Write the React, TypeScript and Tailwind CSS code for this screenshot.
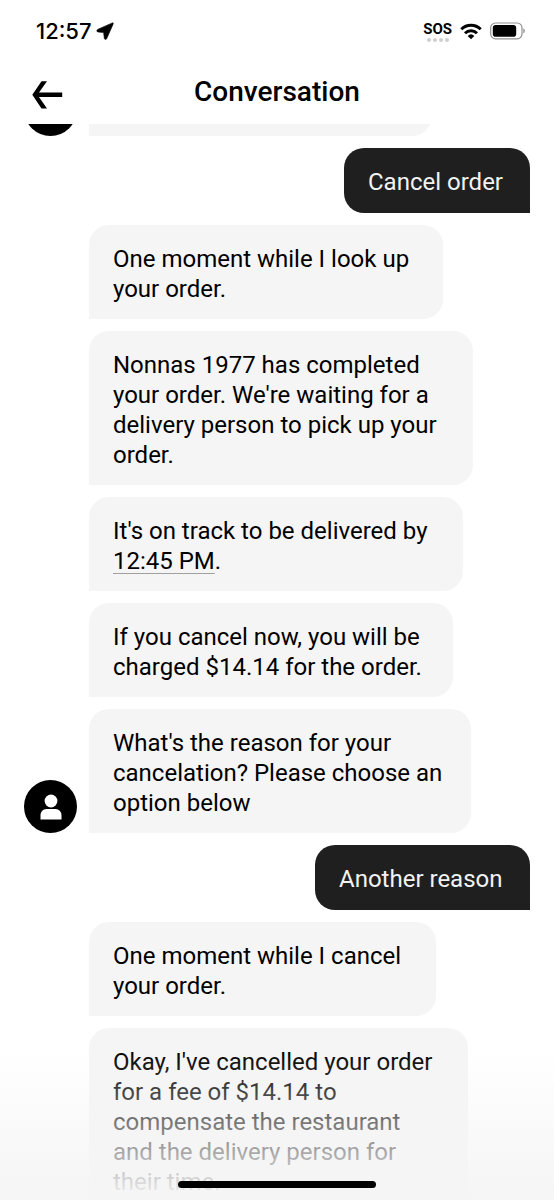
import type { ReactNode } from "react";

function LocationArrow() {
  return (
    <svg viewBox="0 0 18 18" className="size-[18px]" aria-hidden="true">
      <path d="M16.300.9 1.600 7.400C.4 8 .7 9.900 2 10l5.600.600.700 5.700c.1 1.300 1.800 1.600 2.400.4L17.200 1.900c.3-.7-.2-1.300-.9-1Z" fill="#000" stroke="#000" strokeWidth="0.600" />
    </svg>
  );
}

function WifiIcon() {
  return (
    <svg viewBox="0 0 22 17" className="h-[17px] w-[22px]" aria-hidden="true">
      <g fill="none" stroke="#000" strokeWidth="3">
        <path d="M1.300 6.300a13.800 13.800 0 0 1 19.400 0" />
        <path d="M5 10.300a8.600 8.600 0 0 1 12 0" />
      </g>
      <path d="M7.700 12.900a4.800 4.800 0 0 1 6.600 0L11 16.300Z" fill="#000" />
    </svg>
  );
}

function BatteryIcon() {
  return (
    <svg viewBox="0 0 36 18" className="h-[18px] w-[36px]" aria-hidden="true">
      <rect x="0.700" y="1" width="31.300" height="15.800" rx="4.800" fill="none" stroke="#8f8f8f" strokeWidth="1.200" />
      <rect x="2.800" y="3.100" width="23.400" height="11.600" rx="2.800" fill="#000" />
      <path d="M33.300 6.300c2 .8 2 4.400 0 5.200Z" fill="#8f8f8f" />
    </svg>
  );
}

function BackIcon() {
  return (
    <svg viewBox="0 0 32 28" className="h-7 w-8" aria-hidden="true">
      <path d="M9.500.300H15L7 11.600h23.200v4.500H7l8 11.300H9.500L.3 13.850Z" fill="#000" />
    </svg>
  );
}

function Avatar() {
  return (
    <span className="flex size-[53px] shrink-0 items-center justify-center rounded-full bg-black">
      <svg viewBox="0 0 22 26" className="h-[26px] w-[22px]" aria-hidden="true">
        <circle cx="11" cy="7" r="6.400" fill="#fff" />
        <path d="M.5 25.400v-4.600a5.800 5.800 0 0 1 5.800-5.800h9.400a5.800 5.800 0 0 1 5.800 5.800v4.600Z" fill="#fff" />
      </svg>
    </span>
  );
}

function Received({ width, avatar, children }: { width: string; avatar?: boolean; children: ReactNode }) {
  return (
    <li className="flex items-end gap-3">
      {avatar ? <Avatar /> : <span className="w-[53px] shrink-0" />}
      <p className={`rounded-[20px] rounded-bl-none bg-[#f5f5f5] px-6 pt-[19px] pb-[15px] text-black ${width}`}>{children}</p>
    </li>
  );
}

function Sent({ width, children }: { width: string; children: ReactNode }) {
  return (
    <li className="flex justify-end">
      <p className={`rounded-[20px] rounded-br-none bg-[#1f1f1f] px-6 pt-[19px] pb-4 text-[#f2f2f2] ${width}`}>{children}</p>
    </li>
  );
}

export default function App() {
  return (
    <div className="relative flex h-screen flex-col overflow-hidden bg-white font-['Roboto',sans-serif] text-black">
      <div className="flex h-[62px] shrink-0 items-center justify-between pr-7 pl-9">
        <div className="flex items-center gap-1 font-['Inter',sans-serif] text-[22px] leading-7 font-medium">
          <span>12:57</span>
          <LocationArrow />
        </div>
        <div className="flex items-center gap-2">
          <div className="flex flex-col items-center">
            <span className="text-[15px] leading-[18px] font-bold">SOS</span>
            <span className="flex gap-[2px]">
              {[0, 1, 2, 3].map((dot) => (
                <span key={dot} className="size-1 rounded-full bg-[#cfcfcf]" />
              ))}
            </span>
          </div>
          <WifiIcon />
          <BatteryIcon />
        </div>
      </div>

      <header className="grid h-[62px] shrink-0 grid-cols-[1fr_auto_1fr] items-center px-8 pt-1">
        <button type="button" aria-label="Back" className="justify-self-start">
          <BackIcon />
        </button>
        <h1 className="pb-1.5 text-[28px] leading-8 font-medium">Conversation</h1>
      </header>

      <main className="min-h-0 flex-1 overflow-hidden px-6">
        <div className="flex h-3 items-end gap-3 overflow-hidden">
          <Avatar />
          <div className="h-16 w-[343px] rounded-[20px] rounded-bl-none bg-[#f5f5f5]" />
        </div>
        <ul className="mt-3 flex flex-col gap-3 text-[24px] leading-[30px]">
          <Sent width="min-w-[186px]">Cancel order</Sent>
          <Received width="min-w-[354px]">
            One moment while I look up
            <br />
            your order.
          </Received>
          <Received width="min-w-[384px]">
            Nonnas 1977 has completed
            <br />
            your order. We're waiting for a
            <br />
            delivery person to pick up your
            <br />
            order.
          </Received>
          <Received width="min-w-[374px]">
            It's on track to be delivered by
            <br />
            <span className="underline decoration-[#a0a0a0] decoration-1 underline-offset-4">12:45 PM</span>.
          </Received>
          <Received width="min-w-[364px]">
            If you cancel now, you will be
            <br />
            charged $14.14 for the order.
          </Received>
          <Received width="min-w-[382px]" avatar>
            What's the reason for your
            <br />
            cancelation? Please choose an
            <br />
            option below
          </Received>
          <Sent width="min-w-[215px]">Another reason</Sent>
          <Received width="min-w-[347px]">
            One moment while I cancel
            <br />
            your order.
          </Received>
          <Received width="min-w-[379px]">
            Okay, I've cancelled your order
            <br />
            for a fee of $14.14 to
            <br />
            compensate the restaurant
            <br />
            and the delivery person for
            <br />
            their time.
          </Received>
        </ul>
      </main>

      <div className="pointer-events-none absolute inset-x-0 bottom-0 flex h-[150px] items-end justify-center bg-linear-to-b from-[#f5f5f5]/0 to-[#f5f5f5] pb-3">
        <div className="h-[7px] w-[198px] rounded-full bg-black" />
      </div>
    </div>
  );
}
